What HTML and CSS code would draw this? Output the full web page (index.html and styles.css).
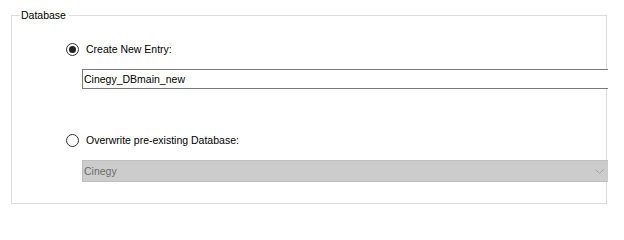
FILE: index.html
```html
<!DOCTYPE html>
<html>
<head>
<meta charset="utf-8">
<link rel="stylesheet" href="styles.css">
</head>
<body>
<fieldset class="group">
  <legend class="group-title">Database</legend>
  <div class="option option-first">
    <svg class="radio" width="13" height="13" viewBox="0 0 13 13"><circle cx="6.5" cy="6.5" r="6" fill="#fff" stroke="#333" stroke-width="1"/><circle cx="6.5" cy="6.5" r="3.5" fill="#222"/></svg>
    <span class="option-label">Create New Entry:</span>
  </div>
  <div class="textbox">Cinegy_DBmain_new</div>
  <div class="option option-second">
    <svg class="radio" width="13" height="13" viewBox="0 0 13 13"><circle cx="6.5" cy="6.5" r="6" fill="#fff" stroke="#333" stroke-width="1"/></svg>
    <span class="option-label">Overwrite pre-existing Database:</span>
  </div>
  <div class="combo">
    <span class="combo-text">Cinegy</span>
    <svg class="chevron" width="9" height="6" viewBox="0 0 9 6"><polyline points="0.5,0.5 4.5,4.5 8.5,0.5" fill="none" stroke="#a6a6a6" stroke-width="1"/></svg>
  </div>
</fieldset>
</body>
</html>
```

FILE: styles.css
```css
html, body {
  margin: 0;
  padding: 0;
  background: #ffffff;
}

body {
  font-family: "Liberation Sans", Arial, sans-serif;
  font-size: 10.5px;
  color: #000000;
  width: 624px;
  height: 216px;
  overflow: hidden;
}

.group {
  box-sizing: border-box;
  margin: 9px 0 0 11px;
  padding: 0 0 21px 0;
  width: 596px;
  border: 1px solid #dcdcdc;
  min-inline-size: 0;
}

.group-title {
  margin-left: 8px;
  padding: 0 3px 0 1px;
  line-height: 13px;
  height: 13px;
}

.option {
  display: flex;
  align-items: center;
  height: 13px;
  margin-left: 54px;
}

.option-first {
  margin-top: 21px;
}

.option-second {
  margin-top: 45px;
}

.radio {
  display: block;
  flex: none;
}

.option-label {
  margin-left: 7px;
  line-height: 13px;
  white-space: nowrap;
}

.textbox {
  box-sizing: border-box;
  margin: 13px 0 0 70px;
  width: 526px;
  height: 20px;
  border: 1px solid #7a7a7a;
  border-right: none;
  background: #ffffff;
  padding-left: 1px;
  line-height: 18px;
  white-space: nowrap;
  position: relative;
}

.combo {
  box-sizing: border-box;
  margin: 13px 0 0 70px;
  width: 526px;
  height: 22px;
  border: 1px solid #bfbfbf;
  border-right: none;
  background: #cccccc;
  padding: 0 4px 0 1px;
  display: flex;
  align-items: center;
  justify-content: space-between;
  position: relative;
}

.combo-text {
  color: #6d6d6d;
  line-height: 20px;
}

.chevron {
  display: block;
  margin-top: 1px;
}
```
